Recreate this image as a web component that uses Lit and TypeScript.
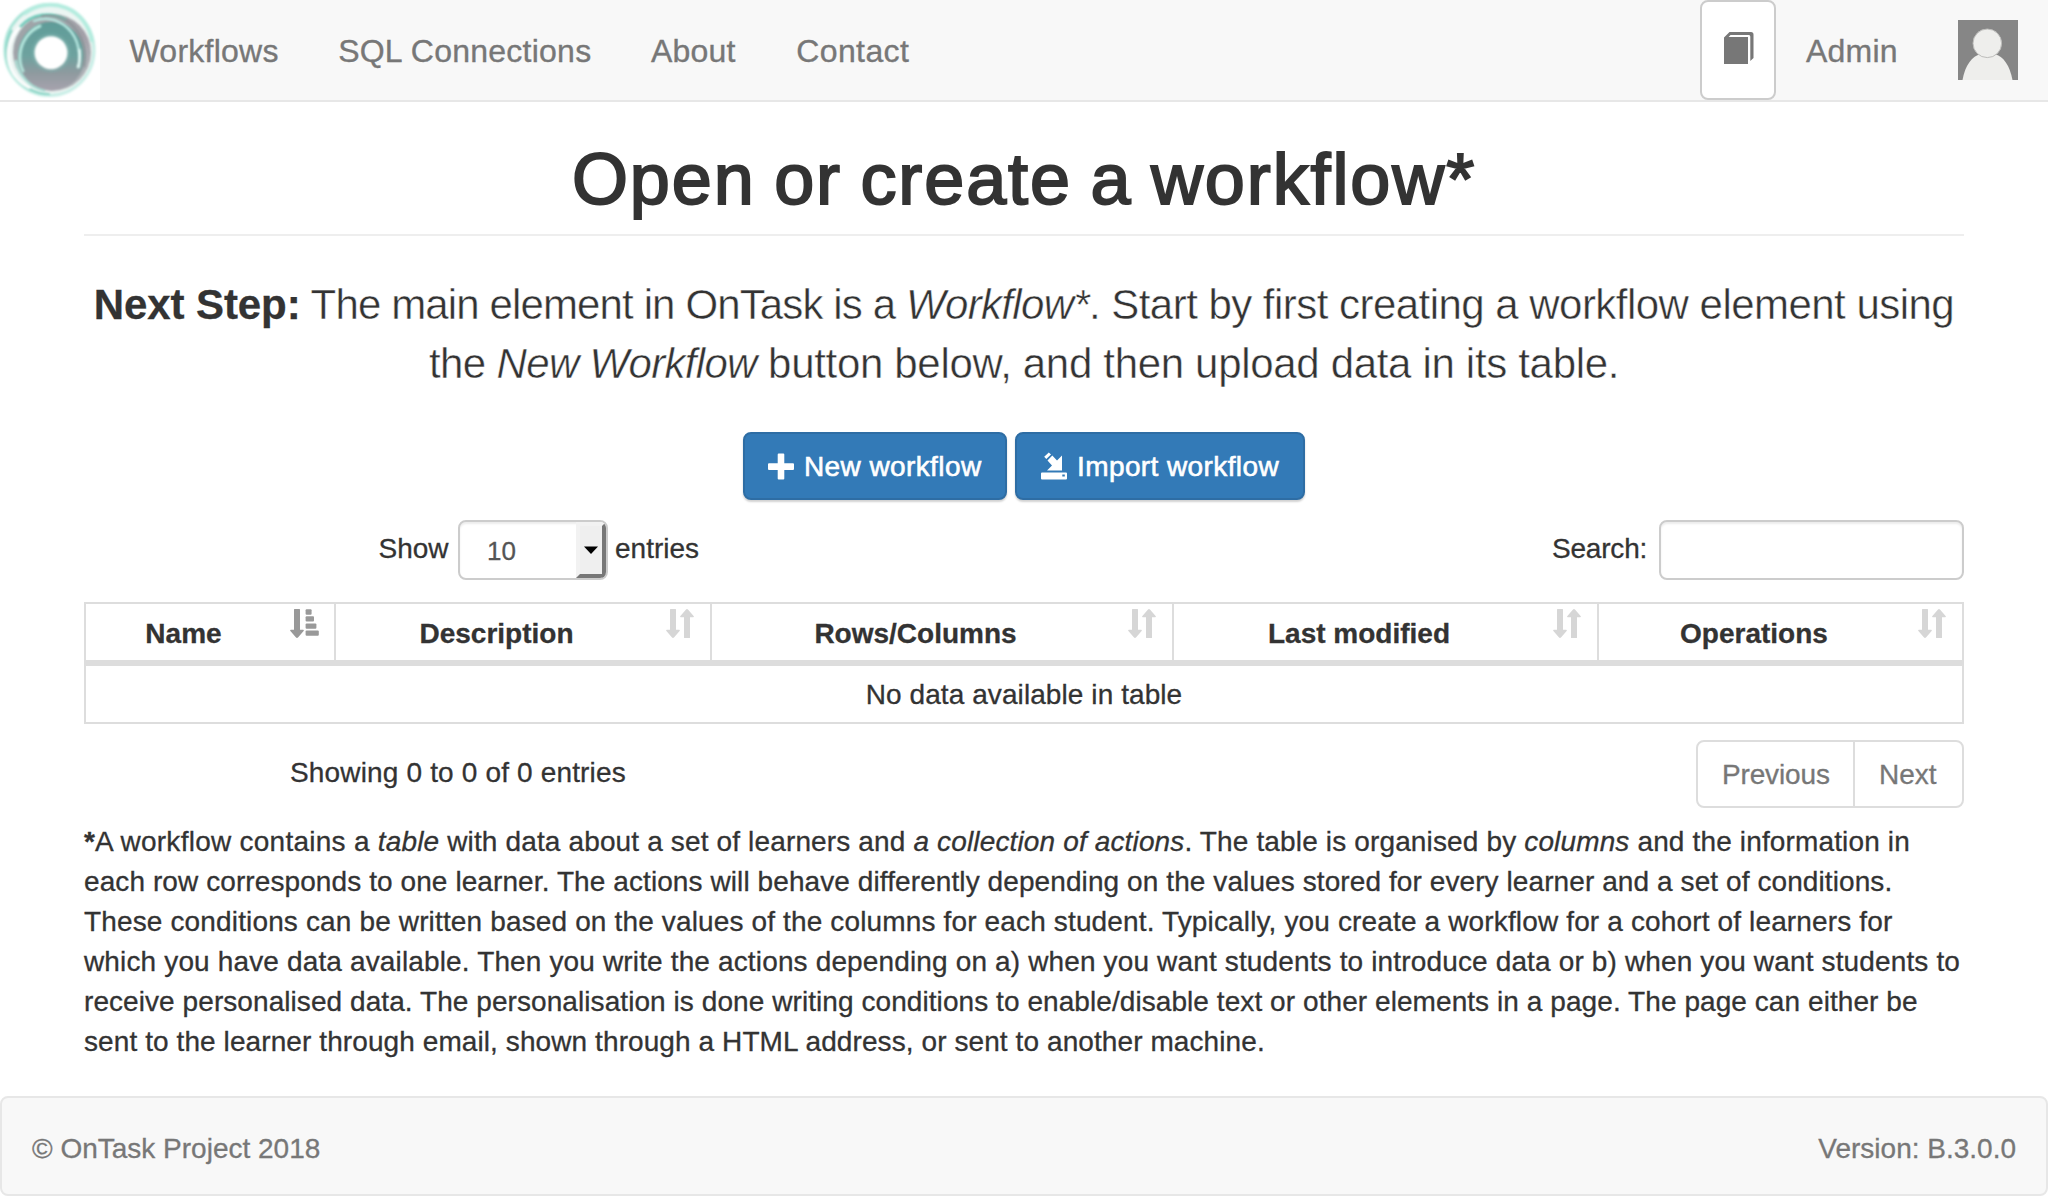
import { LitElement, html, css, svg } from "lit";
import { customElement } from "lit/decorators.js";

const logo = html`<svg class="logo" viewBox="0 0 100 100">
  <defs>
    <linearGradient id="disc" x1="0" y1="0" x2="0" y2="1">
      <stop offset="0" stop-color="#5f9c98" />
      <stop offset="0.5" stop-color="#6ea29f" />
      <stop offset="0.75" stop-color="#8f9a9f" />
      <stop offset="1" stop-color="#a7a3ae" />
    </linearGradient>
    <linearGradient id="halo" x1="0" y1="0" x2="1" y2="1">
      <stop offset="0" stop-color="#9fdfd2" />
      <stop offset="0.45" stop-color="#bdeee2" />
      <stop offset="1" stop-color="#cdeee8" />
    </linearGradient>
    <linearGradient id="crescent" x1="0" y1="0" x2="1" y2="1">
      <stop offset="0" stop-color="#9da6a9" />
      <stop offset="0.6" stop-color="#a3a0a8" />
      <stop offset="1" stop-color="#b5bfc2" />
    </linearGradient>
    <filter id="soft" x="-10%" y="-10%" width="120%" height="120%"><feGaussianBlur stdDeviation="0.8" /></filter>
    <filter id="softer" x="-20%" y="-20%" width="140%" height="140%"><feGaussianBlur stdDeviation="1.3" /></filter>
  </defs>
  <rect width="100" height="100" fill="#fff" />
  <g filter="url(#soft)">
    <ellipse cx="49.5" cy="50" rx="44.5" ry="45.5" fill="#ecf5f3" stroke="url(#halo)" stroke-width="3" />
    <path d="M24 14 A42 42 0 0 1 92 42" fill="none" stroke="#b4ecdf" stroke-width="4" />
    <path d="M12 30 A43 43 0 0 0 50 94" fill="none" stroke="#84d3c4" stroke-width="2.2" />
    <path d="M20 27 A37 37 0 0 0 30 88" fill="none" stroke="#fff" stroke-width="2.6" />
  </g>
  <g filter="url(#soft)">
    <ellipse cx="52" cy="52.5" rx="39" ry="38.5" fill="url(#crescent)" />
    <path d="M20 27 A36 36 0 0 1 66 20" fill="none" stroke="#69c9b8" stroke-width="2.5" />
    <path d="M16 60 A38 38 0 0 0 45 91" fill="none" stroke="#a9dfd5" stroke-width="2.5" />
    <ellipse cx="51.5" cy="56" rx="33.5" ry="34.5" fill="url(#disc)" />
  </g>
  <g filter="url(#soft)" fill="none" stroke-linecap="round">
    <path d="M40 26 A32 34 0 0 0 20 54 Q19 63 23 71" stroke="#b5e6dd" stroke-width="3" />
    <path d="M34 21 Q50 15 64 25 Q82 38 79 67" stroke="#b7e9e2" stroke-width="2.4" />
    <path d="M79.5 50 Q80.5 60 78 67" stroke="#e6fbf7" stroke-width="2.6" />
    <path d="M42 16.5 Q58 13 71 24 Q88 40 84 66" stroke="#8d9499" stroke-width="2" />
  </g>
  <circle cx="51" cy="52.7" r="19.5" fill="#7fb5b0" opacity="0.4" filter="url(#softer)" />
  <circle cx="51" cy="52.7" r="16.5" fill="#fff" filter="url(#soft)" />
</svg>`;

const bookIcon = html`<svg class="book" viewBox="0 0 30 32">
  <path d="M0 5.5 L5.5 0 H27 Q29.5 0 29.5 2.5 V26 L26.3 29 V4.5 Q26.3 3 25 3 H6.5 L4.6 5 H24 V32 H0Z" fill="#777" />
</svg>`;

const avatar = html`<svg class="avatar" viewBox="0 0 60 60">
  <rect width="60" height="60" fill="#868686" />
  <path d="M4.5 60 C7 45 15 35.5 22 34.5 H37 C45 35.5 52 46 54.5 60Z" fill="#eeeeec" />
  <circle cx="29.3" cy="23.3" r="14.3" fill="#eeeeec" stroke="#bdbdbb" stroke-width="1" />
</svg>`;

const plusIcon = html`<svg class="bicon" viewBox="0 0 26 28">
  <path d="M10.7 1.5 H15.3 Q16.3 1.5 16.3 2.5 V11.3 H25 Q26 11.3 26 12.3 V16.9 Q26 17.9 25 17.9 H16.3 V26.5 Q16.3 27.5 15.3 27.5 H10.7 Q9.7 27.5 9.7 26.5 V17.9 H1 Q0 17.9 0 16.9 V12.3 Q0 11.3 1 11.3 H9.7 V2.5 Q9.7 1.5 10.7 1.5Z" fill="#fff" />
</svg>`;

const importIcon = html`<svg class="bicon" viewBox="0 0 26 28">
  <path d="M3.2 4.8 L7.8 0.4 L10 2.4 L5.3 7Z M11.3 3.6 L16 8.4 L21 3.4 V18.4 H6 L11 13.4 L6.5 8.6Z" fill="#fff" />
  <path fill-rule="evenodd" d="M1 20.4 H25 Q26 20.4 26 21.4 V26.6 Q26 27.6 25 27.6 H1 Q0 27.6 0 26.6 V21.4 Q0 20.4 1 20.4Z M21.3 22.6 V24.6 H23.8 V22.6Z" fill="#fff" />
</svg>`;

const downArrow = svg`<path d="M4.6 0 H9.4 Q10 0 10 .6 V20.8 H13.2 Q14.4 20.8 13.6 21.9 L8.2 28.2 Q7 29.6 5.8 28.2 L.4 21.9 Q-.4 20.8 .8 20.8 H4 V.6 Q4 0 4.6 0Z" />`;

const sortBoth = html`<svg class="sort" viewBox="0 0 29 29" fill="#d6d6d6">
  ${downArrow}
  <path d="M18.6 29 H23.4 Q24 29 24 28.4 V8.2 H27.2 Q28.4 8.2 27.6 7.1 L22.2 .8 Q21 -.6 19.8 .8 L14.4 7.1 Q13.6 8.2 14.8 8.2 H18 V28.4 Q18 29 18.6 29Z" />
</svg>`;

const sortAsc = html`<svg class="sort" viewBox="0 0 29 29" fill="#999">
  ${downArrow}
  <rect x="15.6" y="0.3" width="6" height="5.4" rx="1" />
  <rect x="15.6" y="7.2" width="8.4" height="5.4" rx="1" />
  <rect x="15.6" y="14.4" width="10.8" height="5.4" rx="1" />
  <rect x="15.6" y="21.4" width="13.2" height="5.4" rx="1" />
</svg>`;

const columns = ["Name", "Description", "Rows/Columns", "Last modified", "Operations"];

@customElement("app-root")
export class AppRoot extends LitElement {
  static styles = css`
    :host {
      display: block;
      box-sizing: border-box;
      height: 1196px;
      background: #fff;
      color: #333;
      font: 28px/40px "Liberation Sans", Arial, sans-serif;
      -webkit-text-stroke: 0.3px currentColor;
      overflow: hidden;
    }
    * { box-sizing: border-box; }
    svg { display: block; flex: none; }

    .nav {
      display: flex;
      height: 102px;
      background: #f8f8f8;
      border-bottom: 2px solid #e7e7e7;
      color: #777;
      font-size: 32px;
      line-height: 102px;
      -webkit-text-stroke: 0.35px #777;
    }
    .logo { width: 100px; height: 100px; }
    .links { display: flex; flex: 1; padding-left: 29.5px; gap: 59.5px; letter-spacing: 0.24px; }
    .links span:last-child { margin-left: 1px; letter-spacing: 0.4px; }
    .help {
      display: flex;
      justify-content: center;
      width: 76px;
      height: 100px;
      padding-top: 30px;
      padding-left: 2px;
      background: #fff;
      border: 2px solid #ccc;
      border-radius: 8px;
    }
    .book { width: 30px; height: 32px; }
    .user { padding-left: 30px; letter-spacing: 0.2px; }
    .avatar { width: 60px; height: 60px; margin: 20px 30px 0 60px; }
    .admin { width: 92px; white-space: nowrap; }

    .container { padding: 0 84px; }
    h1 {
      margin: 38px 0 0;
      height: 96px;
      border-bottom: 2px solid #eee;
      font-size: 72px;
      font-weight: 400;
      line-height: 79px;
      letter-spacing: 1.9px;
      word-spacing: -3.4px;
      text-align: center;
      -webkit-text-stroke: 2px #333;
    }
    .lead {
      margin-top: 39px;
      font-size: 42px;
      line-height: 59px;
      text-align: center;
      white-space: nowrap;
      -webkit-text-stroke: 0.45px #fff;
    }
    .lead b { -webkit-text-stroke: 0.3px #333; letter-spacing: -0.1px; }
    .l1a { letter-spacing: -0.87px; }
    .l1b { letter-spacing: -0.53px; }
    .l2a { letter-spacing: -0.6px; }
    .l2b { letter-spacing: -0.32px; }
    .lead i { letter-spacing: -0.68px; }

    .buttons { display: flex; justify-content: center; gap: 8px; margin-top: 39px; }
    .btn {
      display: flex;
      align-items: center;
      height: 68px;
      padding-left: 23px;
      border: 2px solid #2e6da4;
      border-radius: 8px;
      background: #337ab7;
      color: #fff;
      letter-spacing: 0.4px;
      line-height: 66px;
      white-space: nowrap;
      box-shadow: 0 2px 2px rgba(0, 0, 0, 0.18);
      -webkit-text-stroke: 0.6px #fff;
    }
    .btn span { padding-top: 2px; }
    .new { width: 264px; }
    .import { width: 290px; padding-left: 24px; }
    .bicon { width: 26px; height: 28px; margin-right: 10px; }

    .controls { display: flex; align-items: center; height: 60px; margin-top: 20px; }
    .controls span { padding-bottom: 3px; }
    .show { width: 79.5px; margin-left: 294.5px; }
    .select {
      display: flex;
      width: 150px;
      height: 60px;
      margin-right: 7px;
      border: 2px solid #ccc;
      border-radius: 8px;
      overflow: hidden;
      box-shadow: inset 0 2px 2px rgba(0, 0, 0, 0.075);
    }
    .value { flex: 1; padding-left: 27px; font-size: 26px; line-height: 58px; color: #555; }
    .drop {
      display: flex;
      align-items: center;
      justify-content: center;
      width: 30px;
      border: 4px solid;
      border-color: #f2f2f2 #777 #777 #f2f2f2;
      background: #efefef;
    }
    .caret { width: 14px; height: 8px; }
    .search { margin-left: auto; width: 107px; letter-spacing: -0.2px; }
    .input {
      width: 305px;
      height: 60px;
      border: 2px solid #ccc;
      border-radius: 8px;
      box-shadow: inset 0 2px 2px rgba(0, 0, 0, 0.075);
    }

    .table { margin-top: 22px; border: 2px solid #ddd; }
    .head {
      display: grid;
      grid-template-columns: 250px 376px 462px 425px 1fr;
      height: 62px;
      border-bottom: 6px solid #ddd;
      font-weight: 700;
    }
    .th {
      display: flex;
      padding-right: 15px;
      border-right: 2px solid #ddd;
    }
    .th:last-child { border-right: 0; }
    .th .label { flex: 1; padding: 10px 0 0 6px; text-align: center; white-space: nowrap; margin-right: 15px; }
    .th:first-child .label { padding-left: 6px; margin-right: 15px; }
    .sort { width: 29px; height: 29px; margin-top: 5px; }
    .empty { height: 56px; line-height: 58px; text-align: center; letter-spacing: 0.08px; }

    .foot { display: flex; height: 68px; margin-top: 16px; line-height: 66px; }
    .info { flex: 1; padding-left: 206px; letter-spacing: 0.16px; }
    .pager { display: flex; border: 2px solid #ddd; border-radius: 8px; color: #777; }
    .prev { width: 157px; padding-left: 24px; border-right: 2px solid #ddd; letter-spacing: -0.15px; }
    .next { width: 107px; padding-left: 24px; }

    .note { margin-top: 14px; height: 240px; white-space: nowrap; }
    .note div { letter-spacing: 0.145px; }
    .note .intro { letter-spacing: 0.26px; }
    .note .tight { letter-spacing: 0.09px; }
    .note .tighter { letter-spacing: 0.07px; }

    .footer {
      display: flex;
      justify-content: space-between;
      height: 100px;
      margin-top: 34px;
      padding: 0 30px;
      border: 2px solid #e7e7e7;
      border-radius: 8px;
      background: #f8f8f8;
      color: #777;
      line-height: 102px;
    }
  `;

  render() {
    return html`
      <nav class="nav">
        ${logo}
        <div class="links"><span>Workflows</span><span>SQL Connections</span><span>About</span><span>Contact</span></div>
        <div class="help">${bookIcon}</div>
        <div class="user"><div class="admin">Admin</div></div>
        ${avatar}
      </nav>
      <main class="container">
        <h1>Open or create a workflow*</h1>
        <div class="lead">
          <div><b>Next Step:</b><span class="l1a"> The main element in OnTask is a </span><i>Workflow*</i><span class="l1b">. Start by first creating a workflow element using</span></div>
          <div><span class="l2a">the </span><i>New Workflow</i><span class="l2b"> button below, and then upload data in its table.</span></div>
        </div>
        <div class="buttons">
          <div class="btn new">${plusIcon}<span>New workflow</span></div>
          <div class="btn import">${importIcon}<span>Import workflow</span></div>
        </div>
        <div class="controls">
          <span class="show">Show</span>
          <div class="select">
            <div class="value">10</div>
            <div class="drop"><svg class="caret" viewBox="0 0 14 8"><path d="M0 0.5 H14 L7 8Z" fill="#000" /></svg></div>
          </div>
          <span>entries</span>
          <span class="search">Search:</span>
          <div class="input"></div>
        </div>
        <div class="table">
          <div class="head">
            ${columns.map((name, i) => html`<div class="th"><div class="label">${name}</div>${i === 0 ? sortAsc : sortBoth}</div>`)}
          </div>
          <div class="empty">No data available in table</div>
        </div>
        <div class="foot">
          <div class="info">Showing 0 to 0 of 0 entries</div>
          <div class="pager"><div class="prev">Previous</div><div class="next">Next</div></div>
        </div>
        <div class="note">
          <div><b>*</b><span class="intro">A workflow contains a </span><i>table</i> with data about a set of learners and <i>a collection of actions</i>. The table is organised by <i>columns</i> and the information in</div>
          <div class="tight">each row corresponds to one learner. The actions will behave differently depending on the values stored for every learner and a set of conditions.</div>
          <div>These conditions can be written based on the values of the columns for each student. Typically, you create a workflow for a cohort of learners for</div>
          <div>which you have data available. Then you write the actions depending on a) when you want students to introduce data or b) when you want students to</div>
          <div class="tighter">receive personalised data. The personalisation is done writing conditions to enable/disable text or other elements in a page. The page can either be</div>
          <div class="tight">sent to the learner through email, shown through a HTML address, or sent to another machine.</div>
        </div>
      </main>
      <footer class="footer"><span>© OnTask Project 2018</span><span>Version: B.3.0.0</span></footer>
    `;
  }
}
